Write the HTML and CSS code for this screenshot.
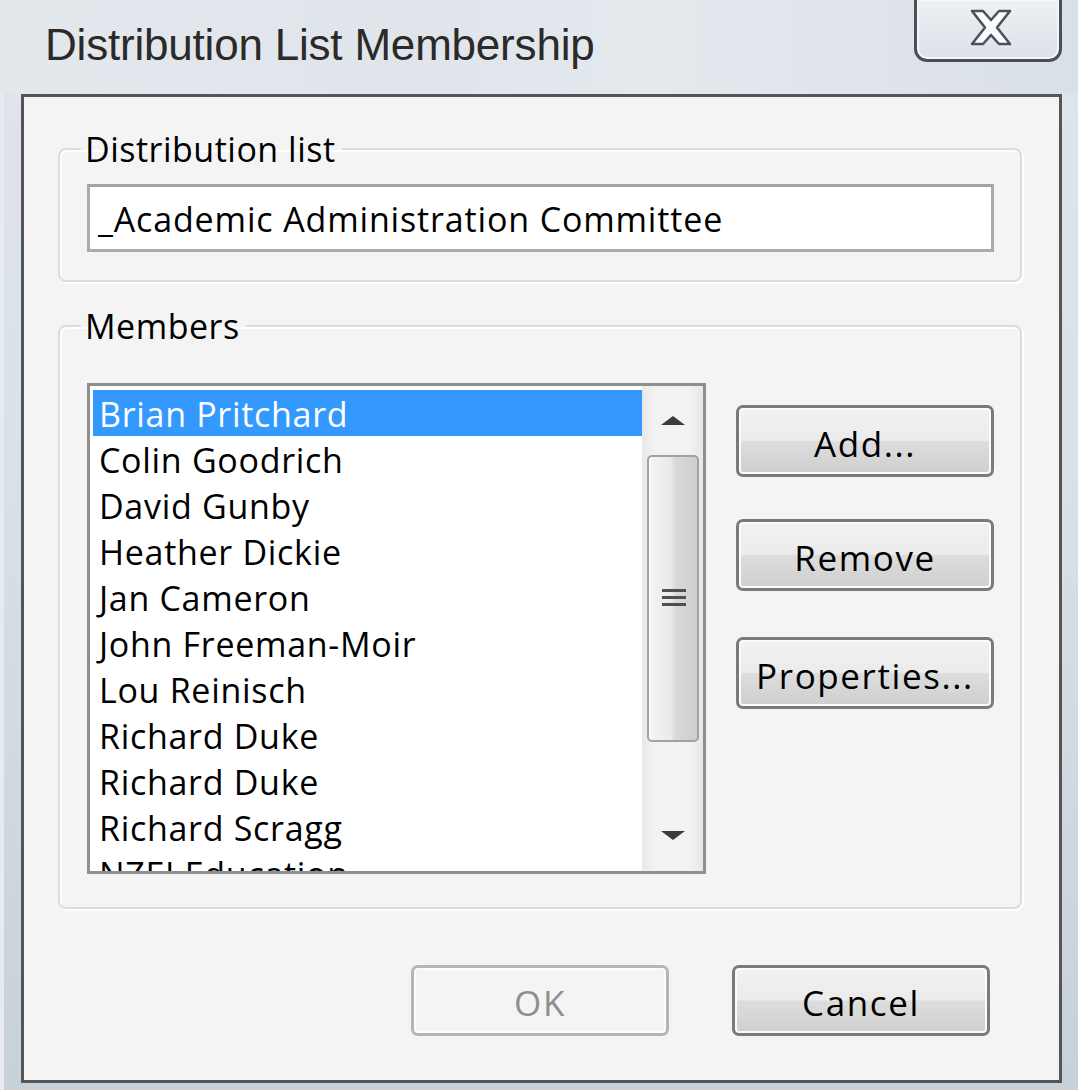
FILE: index.html
```html
<!DOCTYPE html>
<html lang="en">
<head>
<meta charset="utf-8">
<title>Distribution List Membership</title>
<link rel="stylesheet" href="styles.css">
</head>
<body>
<div class="window">
  <div class="titlebar">
    <span class="title">Distribution List Membership</span>
    <button class="close" type="button" aria-label="Close">
      <svg width="44" height="37" viewBox="-2 -2 44 37">
        <polygon points="1,0 12,0 20,9 28,0 39,0 26,16.5 39,33 28,33 20,24 12,33 1,33 14,16.5" fill="#fbfcfd" stroke="#4a5260" stroke-width="2.6" stroke-linejoin="round"/>
      </svg>
    </button>
  </div>
  <div class="client">
    <fieldset class="group group-dl">
      <legend>Distribution list</legend>
      <div class="textbox">_Academic Administration Committee</div>
    </fieldset>
    <fieldset class="group group-members">
      <legend>Members</legend>
      <div class="members-row">
        <div class="listbox">
          <ul class="items">
            <li class="item selected">Brian Pritchard</li>
            <li class="item">Colin Goodrich</li>
            <li class="item">David Gunby</li>
            <li class="item">Heather Dickie</li>
            <li class="item">Jan Cameron</li>
            <li class="item">John Freeman-Moir</li>
            <li class="item">Lou Reinisch</li>
            <li class="item">Richard Duke</li>
            <li class="item">Richard Duke</li>
            <li class="item">Richard Scragg</li>
            <li class="item">NZEI Education</li>
          </ul>
          <div class="scrollbar">
            <div class="arrow arrow-up"></div>
            <div class="thumb"><div class="grip"></div></div>
            <div class="arrow arrow-down"></div>
          </div>
        </div>
        <div class="side-buttons">
          <button class="btn" type="button">Add...</button>
          <button class="btn" type="button">Remove</button>
          <button class="btn btn-props" type="button">Properties...</button>
        </div>
      </div>
    </fieldset>
    <div class="dialog-buttons">
      <button class="btn" type="button" disabled>OK</button>
      <button class="btn" type="button">Cancel</button>
    </div>
  </div>
</div>
</body>
</html>
```

FILE: styles.css
```css
html, body {
  margin: 0;
  padding: 0;
}

body {
  width: 1078px;
  height: 1090px;
  overflow: hidden;
  font-family: "Open Sans", "Noto Sans", sans-serif;
  color: #000;
}

.window {
  width: 1078px;
  height: 1090px;
  display: flex;
  flex-direction: column;
  background: linear-gradient(to bottom, #e0e5eb 0%, #d9e0e7 45%, #c7d1da 100%);
  box-shadow: inset 4px 0 0 #e7eaee;
  box-sizing: border-box;
}

.titlebar {
  height: 94px;
  flex: none;
  display: flex;
  justify-content: space-between;
  align-items: flex-start;
  background: linear-gradient(to right, #e3e8ed 0%, #dfe5eb 40%, #e4e9ee 60%, #d9e0e6 100%);
}

.title {
  font-family: "Liberation Sans", Arial, sans-serif;
  font-size: 44px;
  line-height: 50px;
  color: #2b2a28;
  margin: 20px 0 0 45px;
  letter-spacing: -0.2px;
}

.close {
  width: 148px;
  height: 66px;
  margin: -4px 16px 0 0;
  padding: 0;
  border: 3px solid #48505a;
  border-radius: 0 0 13px 13px;
  background: linear-gradient(to bottom, #eef1f4 0%, #e3e8ed 60%, #dce2e8 100%);
  box-shadow: inset 0 0 0 2px #f4f6f8;
  display: flex;
  align-items: center;
  justify-content: center;
}

.close svg {
  display: block;
  margin-top: -4px;
  margin-left: 6px;
}

.client {
  flex: 1;
  margin: 0 16px 7px 21px;
  border: 3px solid #555;
  background: #f4f4f4;
  display: flex;
  flex-direction: column;
  box-sizing: border-box;
}

.group {
  margin: 0 37px 0 34px;
  border: 2px solid #d5dee5;
  border-radius: 8px;
  box-shadow: inset 2px 2px 0 #fff, 2px 2px 0 #fff;
  padding: 0 26px 0 27px;
  min-width: 0;
}

.group legend {
  font-size: 34px;
  line-height: 40px;
  letter-spacing: 0.5px;
  padding: 0 6px 0 4px;
  margin-left: -6px;
}

.group-dl {
  margin-top: 32px;
  padding-top: 15px;
  padding-bottom: 28px;
}

.group-members {
  margin-top: 24px;
  padding-top: 37px;
  padding-bottom: 33px;
}

.textbox {
  height: 68px;
  box-sizing: border-box;
  border: 3px solid #ababab;
  border-top-color: #a3a3a3;
  background: #fff;
  font-size: 34px;
  line-height: 64px;
  letter-spacing: 0.85px;
  padding-left: 8px;
  white-space: nowrap;
}

.members-row {
  display: flex;
  align-items: flex-start;
  gap: 30px;
}

.listbox {
  width: 619px;
  height: 491px;
  box-sizing: border-box;
  border: 3px solid #8f8f8f;
  background: #fff;
  display: flex;
  overflow: hidden;
}

.items {
  list-style: none;
  margin: 0;
  padding: 4px 0 0 3px;
  width: 549px;
  flex: none;
  overflow: hidden;
}

.item {
  height: 46px;
  font-size: 34px;
  line-height: 48px;
  letter-spacing: 0.7px;
  padding-left: 6px;
  white-space: nowrap;
}

.item.selected {
  background: #3399ff;
  color: #fff;
}

.scrollbar {
  flex: 1;
  display: flex;
  flex-direction: column;
  align-items: center;
  background: linear-gradient(to right, #e8e8e8 0%, #f2f2f2 20%, #f2f2f2 80%, #e6e6e6 100%);
}

.arrow {
  height: 66px;
  width: 100%;
  display: flex;
  align-items: center;
  justify-content: center;
  flex: none;
}

.arrow::before {
  content: "";
  width: 0;
  height: 0;
  border-left: 12px solid transparent;
  border-right: 12px solid transparent;
}

.arrow-up::before {
  border-bottom: 9px solid #3b3b3b;
  margin-top: 2px;
}

.arrow-down {
  margin-top: auto;
  height: 62px;
}

.arrow-down::before {
  border-top: 9px solid #3b3b3b;
  margin-top: -10px;
}

.thumb {
  width: 52px;
  height: 287px;
  box-sizing: border-box;
  margin-top: 3px;
  border: 2px solid #a2a2a2;
  border-radius: 5px;
  background: linear-gradient(to right, #f4f4f4 0%, #eaeaea 45%, #d9d9d9 55%, #cdcdcd 100%);
  box-shadow: inset 2px 0 0 #fbfbfb;
  display: flex;
  align-items: center;
  justify-content: center;
}

.grip {
  width: 24px;
  height: 20px;
  background: repeating-linear-gradient(to bottom, #4e4e4e 0, #4e4e4e 3px, transparent 3px, transparent 7px);
  margin-left: 2px;
}

.side-buttons {
  display: flex;
  flex-direction: column;
  gap: 42px;
  padding-top: 22px;
}

.btn-props {
  margin-top: 4px;
}

.btn {
  width: 258px;
  height: 72px;
  box-sizing: border-box;
  border: 3px solid #7a7a7a;
  border-radius: 7px;
  background: linear-gradient(to bottom, #f2f2f2 0%, #ebebeb 49%, #dddddd 51%, #cfcfcf 100%);
  box-shadow: inset 0 0 0 2px #fbfbfb;
  font-family: "Open Sans", "Noto Sans", sans-serif;
  font-size: 35px;
  letter-spacing: 1.6px;
  line-height: 1;
  color: #000;
  padding: 4px 0 0;
  cursor: default;
}

.btn:disabled {
  border-color: #b3b6b8;
  background: #f4f4f4;
  box-shadow: inset 0 0 0 2px #fcfcfc;
  color: #8a8f94;
}

.dialog-buttons {
  margin-top: auto;
  display: flex;
  justify-content: flex-end;
  gap: 63px;
  padding: 0 69px 44px 0;
}

.dialog-buttons .btn {
  height: 71px;
}
```
